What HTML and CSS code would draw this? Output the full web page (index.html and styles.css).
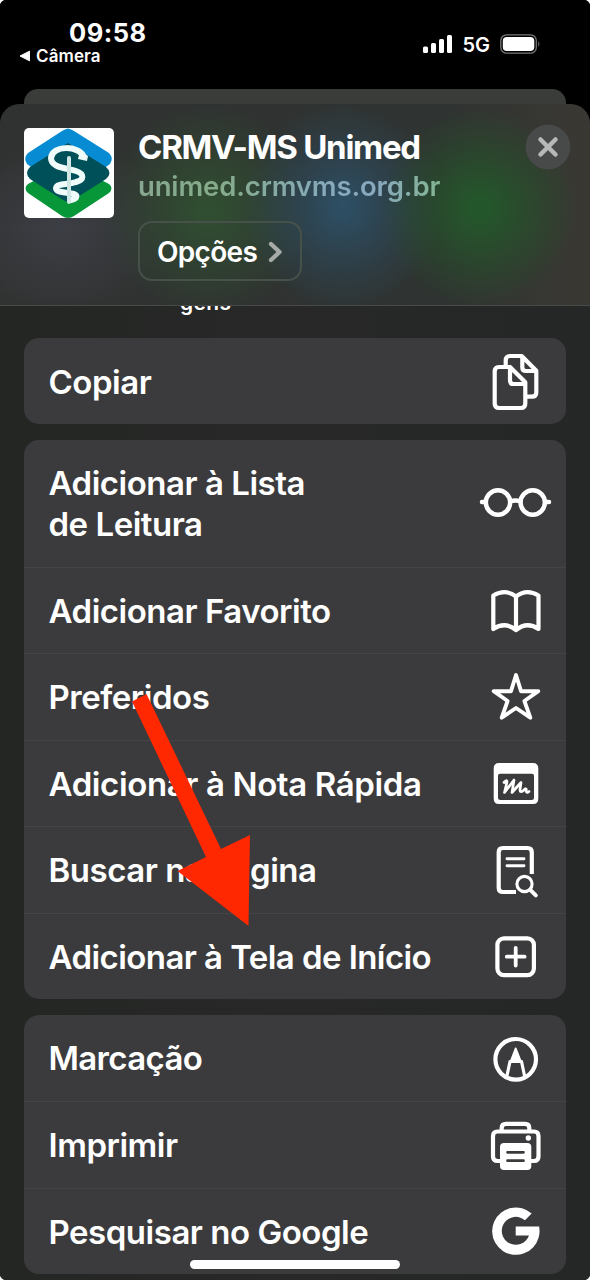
FILE: index.html
```html
<!DOCTYPE html>
<html lang="pt-BR">
<head>
<meta charset="utf-8">
<title>CRMV-MS Unimed</title>
<link rel="stylesheet" href="styles.css">
</head>
<body>
<div class="phone">
  <header class="status">
    <div class="status-left">
      <div class="clock">09:58</div>
      <div class="back"><svg width="12" height="12" viewBox="0 0 12 12"><path d="M1 6 10.5 1.2V10.8Z" fill="#fff" stroke="#fff" stroke-linejoin="round"/></svg><span>Câmera</span></div>
    </div>
    <div class="status-right">
      <svg width="30" height="20" viewBox="0 0 30 20" fill="#fff"><rect x="0" y="12.500" width="5" height="6.500" rx="1.5"/><rect x="8" y="9" width="5" height="10" rx="1.5"/><rect x="16" y="5" width="5" height="14" rx="1.5"/><rect x="24" y="1" width="5" height="18" rx="1.5"/></svg>
      <span class="network">5G</span>
      <svg width="42" height="20" viewBox="0 0 42 20"><rect x=".8" y=".8" width="35.5" height="18.4" rx="5.8" fill="none" stroke="#77777a" stroke-width="1.3"/><rect x="2.8" y="3" width="31.5" height="14" rx="4" fill="#fff"/><path d="M38.3 7v6q2.2-3 0-6Z" fill="#77777a"/></svg>
    </div>
  </header>
  <div class="backcard"></div>
  <main class="sheet">
    <section class="head">
      <svg class="logo" width="90" height="90" viewBox="0 0 90 90">
        <rect width="90" height="90" fill="#fff"/>
        <path d="M44 .5Q47 1 50 3L85 25Q90 30 86 36L44 66 3 36Q-1 30 4 25L38 3Q41 1 44 .5Z" fill="#078bd2"/>
        <path d="M4 56 44 35 85 56Q90 60 85 65L50 88Q44 92 38 88L4 65Q-1 60 4 56Z" fill="#079638"/>
        <path d="M44 15 82 39Q89 45 82 51L49 72Q44 75 39 72L6 51Q0 45 6 39Z" fill="#00505a"/>
        <path d="M60 29C55 17 28 17 27 30 27 40 43 40 52 43 61 46 60 52 52 54 43 57 33 55 32 60 32 65 43 64 50 66 55 68 52 71 47 72" fill="none" stroke="#effcfa" stroke-width="6" stroke-linecap="round"/>
        <path d="M56 23 64 28 63 33 54 31Z" fill="#effcfa"/>
        <path d="M45 30V74" stroke="#cfe8e6" stroke-width="4" stroke-linecap="round"/>
      </svg>
      <div class="info">
        <h1>CRMV-MS Unimed</h1>
        <div class="url">unimed.crmvms.org.br</div>
        <div class="options"><span>Opções</span><svg width="15" height="24" viewBox="0 0 15 24"><path d="m3 4 8.500 8L3 20" fill="none" stroke="#a6aba7" stroke-width="4.300" stroke-linecap="round" stroke-linejoin="round"/></svg></div>
      </div>
      <svg class="close" width="46" height="46" viewBox="0 0 46 46"><circle cx="23" cy="23" r="22.400" fill="#484a49"/><path d="m15.500 15.500 15 15m0-15-15 15" stroke="#b7b8b8" stroke-width="4.500" stroke-linecap="round"/></svg>
    </section>
    <div class="peek"><span>gens</span></div>
    <div class="groups">
      <section class="group">
        <div class="row"><span class="label">Copiar</span><svg class="icon" viewBox="0 0 76 64"><path d="M32 18H21Q16.700 18 16.700 22.500V54.500Q16.700 59 21 59H43Q47.300 59 47.300 54.500V33.300L32 18V31.500Q32 35 35.500 35H47M27.700 17V11.500Q27.700 7 32 7H43.700L58.300 21.700V43.500Q58.300 47.700 54 47.700H49M44.300 8V18.500Q44.300 22 48 22H58"/></svg></div>
      </section>
      <section class="group">
        <div class="row tall"><span class="label">Adicionar à Lista<br>de Leitura</span><svg class="icon" viewBox="0 0 76 64"><g stroke-width="4.500"><circle cx="20" cy="31.500" r="12.200"/><circle cx="54.700" cy="31.500" r="12.200"/><path d="M32.500 30.200Q37.500 28.800 42.500 30.200M4 31H7M67.500 31H71"/></g></svg></div>
        <div class="row"><span class="label">Adicionar Favorito</span><svg class="icon" viewBox="0 0 76 64"><path d="M38 18.500V52Q27 43 15.300 51V17.500Q27.500 10.500 38 18.500Q48.500 10.500 60.500 17.500V51Q49 43 38 52"/></svg></div>
        <div class="row"><span class="label">Preferidos</span><svg class="icon" viewBox="0 0 76 64"><path d="m38 10 5 16.200 17.300-.1L46.400 36l5.900 16.700L38 43 23.700 52.700 29.600 36 15.700 26.100 33 26.200Z" stroke-width="3.900"/></svg></div>
        <div class="row"><span class="label wide">Adicionar à Nota Rápida</span><svg class="icon" viewBox="0 0 76 64"><path fill="#fff" stroke="none" fill-rule="evenodd" d="M21 12H55Q60.300 12 60.300 17.500V47.500Q60.300 53 55 53H21Q15.700 53 15.700 47.500V17.500Q15.700 12 21 12ZM22 22.700Q20 22.700 20 24.700V46.500Q20 49 22.500 49H53.500Q56 49 56 46.500V24.700Q56 22.700 54 22.700Z"/><path d="M26 31.500C29 28 29.500 30 28.500 33L26.500 41.500 36 29 34 41.500 43 31.500 42 38.500Q42 43 46.500 38.500C48 37 48.500 38 48.200 40Q48.500 42.500 51 40.500" stroke-width="2.700"/></svg></div>
        <div class="row"><span class="label">Buscar na página</span><svg class="icon" viewBox="0 0 76 64"><path d="M38 54H25Q20.700 54 20.700 49.700V14.300Q20.700 10 25 10H49.500Q53.800 10 53.800 14.300V36" stroke-linecap="butt"/><path d="M29 20.700H46M29 27.700H46" stroke-width="2.900"/><circle cx="46.500" cy="46" r="7.600" stroke-width="3.100"/><path d="m52.300 51.800 5.500 5.500" stroke-width="4"/></svg></div>
        <div class="row"><span class="label home">Adicionar à Tela de Início</span><svg class="icon" viewBox="0 0 76 64"><rect x="19.400" y="14.300" width="36.500" height="36.800" rx="6.500"/><path d="M28.800 32.700H46.600M37.700 23.800V41.600" stroke-width="3.800"/></svg></div>
      </section>
      <section class="group">
        <div class="row"><span class="label tight">Marcação</span><svg class="icon" viewBox="0 0 76 64"><circle cx="37.700" cy="33.300" r="20.300"/><path d="M37.700 22.500 32.500 36H43Z" fill="#fff" stroke-width="2"/><path d="M32 35.500 28.700 51M43.500 35.500 46.800 51" stroke-width="3.200"/></svg></div>
        <div class="row"><span class="label">Imprimir</span><svg class="icon" viewBox="0 0 76 64"><path d="M22 48H19.500Q15 48 15 43.500V23Q15 18.500 19.500 18.500H56Q60.500 18.500 60.500 23V43.500Q60.500 48 56 48H53M23.700 18V15Q23.700 10.800 28 10.800H47Q51.300 10.800 51.300 15V18"/><rect x="22" y="30" width="31.300" height="27" rx="4" fill="#fff" stroke="none"/><path d="M29.500 39.300H45.500M29.500 47.700H45.500" stroke="#3b3b3d" stroke-width="2.700"/><circle cx="50.300" cy="25" r="2.700" fill="#fff" stroke="none"/></svg></div>
        <div class="row"><span class="label">Pesquisar no Google</span><svg class="icon" viewBox="0 0 76 64"><path stroke="none" fill="#fff" d="M53.700 14.500A23.700 23.700 0 1 0 61.100 27.500H37.700V36.500H51A14 14 0 1 1 47 21.300Z"/></svg></div>
      </section>
    </div>
  </main>
  <svg class="pointer" width="120" height="236" viewBox="0 0 120 236"><path d="M2 10.500 16.500 3 91 158 120 144 118.500 235 47.500 180 76 166Z" fill="#ff2800"/></svg>
  <div class="homebar"></div>
  <i class="corner tl"></i><i class="corner tr"></i><i class="corner bl"></i><i class="corner br"></i>
</div>
</body>
</html>
```
FILE: styles.css
```css
* { box-sizing: border-box; }
body { margin: 0; background: #000; font-family: Inter, "Liberation Sans", sans-serif; color: #fff; }
.phone { position: relative; width: 590px; height: 1280px; overflow: hidden; display: flex; flex-direction: column; background: #000; }
.status { height: 89px; flex: none; display: flex; justify-content: space-between; padding: 20px 48px 0 19px; }
.clock { font-size: 25.5px; line-height: 26px; font-weight: 700; padding-left: 50px; letter-spacing: .5px; }
.back { display: flex; align-items: center; gap: 5px; font-size: 17px; line-height: 20px; font-weight: 600; letter-spacing: .1px; }
.status-right { display: flex; height: 20px; margin-top: 14px; align-items: center; }
.network { font-size: 20px; font-weight: 600; margin: 0 10px 0 9px; letter-spacing: 0; padding-top: 2px; }
.backcard { height: 15px; flex: none; margin: 0 24px; border-radius: 14px 14px 0 0; background: #3a3c39; }
.sheet { flex: 1; border-radius: 20px 20px 0 0; overflow: hidden; background: linear-gradient(90deg, #242624, #272827 50%, #242726); }
.head {
  height: 202px; display: flex; padding: 24px 19px 0 24px; border-bottom: 1px solid #474b48;
  background:
    radial-gradient(ellipse 100px 100px at 480px 104px, #24562b 10%, #25532a99 50%, #24562b00),
    radial-gradient(ellipse 100px 105px at 343px 103px, #2d5066 0%, #2d4c5f99 45%, #2d506600),
    radial-gradient(ellipse 105px 105px at 208px 106px, #304e31 5%, #304b3199 50%, #304e3100),
    radial-gradient(ellipse 110px 90px at 60px 125px, #3c3e45, #3c3e4500),
    linear-gradient(90deg, #303231, #2f3331 75%, #3a3833);
}
.logo { border-radius: 5px; flex: none; }
.info { margin-left: 24px; flex: 1; }
h1 { margin: 0; font-size: 33px; line-height: 38px; font-weight: 700; letter-spacing: -1.25px; white-space: nowrap; }
.url { font-size: 27.5px; line-height: 41px; font-weight: 600; letter-spacing: -.15px; color: transparent; background: linear-gradient(90deg, #88a891, #85ac8a 80px, #87a9bb 190px, #89a9be 240px, #83b493 300px); background-clip: text; width: 310px; }
.options { margin-top: 14px; width: 164px; height: 60px; border: 2px solid #465149; border-radius: 14px; display: flex; align-items: center; padding: 2px 0 0 17px; gap: 11px; font-size: 28px; font-weight: 600; letter-spacing: -.7px; }
.close { flex: none; margin-top: -4px; }
.peek { height: 32px; overflow: hidden; padding-left: 180px; font-size: 21px; line-height: 22px; font-weight: 600; letter-spacing: .4px; }
.peek span { display: block; margin-top: -14px; }
.groups { padding: 0 24px; display: flex; flex-direction: column; gap: 15.5px; }
.group { background: #3b3b3d; border-radius: 15px; overflow: hidden; }
.row { height: 86.5px; display: flex; align-items: center; justify-content: space-between; padding: 0 12px 0 24.5px; font-size: 33px; line-height: 41px; font-weight: 600; white-space: nowrap; letter-spacing: -.48px; }
.row:only-child { height: 86px; }
.row + .row { border-top: 1px solid #444446; }
.row.tall { height: 127px; }
.label { padding-top: 2px; }
.label.wide { letter-spacing: -.38px; }
.label.home { letter-spacing: -.57px; }
.label.tight { letter-spacing: -.65px; }
.icon { width: 76px; height: 64px; flex: none; fill: none; stroke: #fff; stroke-width: 4.2; stroke-linecap: round; stroke-linejoin: round; }
.pointer { position: absolute; left: 130px; top: 691px; }
.homebar { position: absolute; left: 190px; top: 1260px; width: 210px; height: 9px; border-radius: 5px; background: #fff; }
.corner { position: absolute; width: 7px; height: 7px; }
.tl { left: 0; top: 0; background: radial-gradient(circle at 100% 100%, #0000 7px, #fff 8px); }
.tr { right: 0; top: 0; background: radial-gradient(circle at 0 100%, #0000 7px, #fff 8px); }
.bl { left: 0; bottom: 0; background: radial-gradient(circle at 100% 0, #0000 7px, #fff 8px); }
.br { right: 0; bottom: 0; background: radial-gradient(circle at 0 0, #0000 7px, #fff 8px); }
```
